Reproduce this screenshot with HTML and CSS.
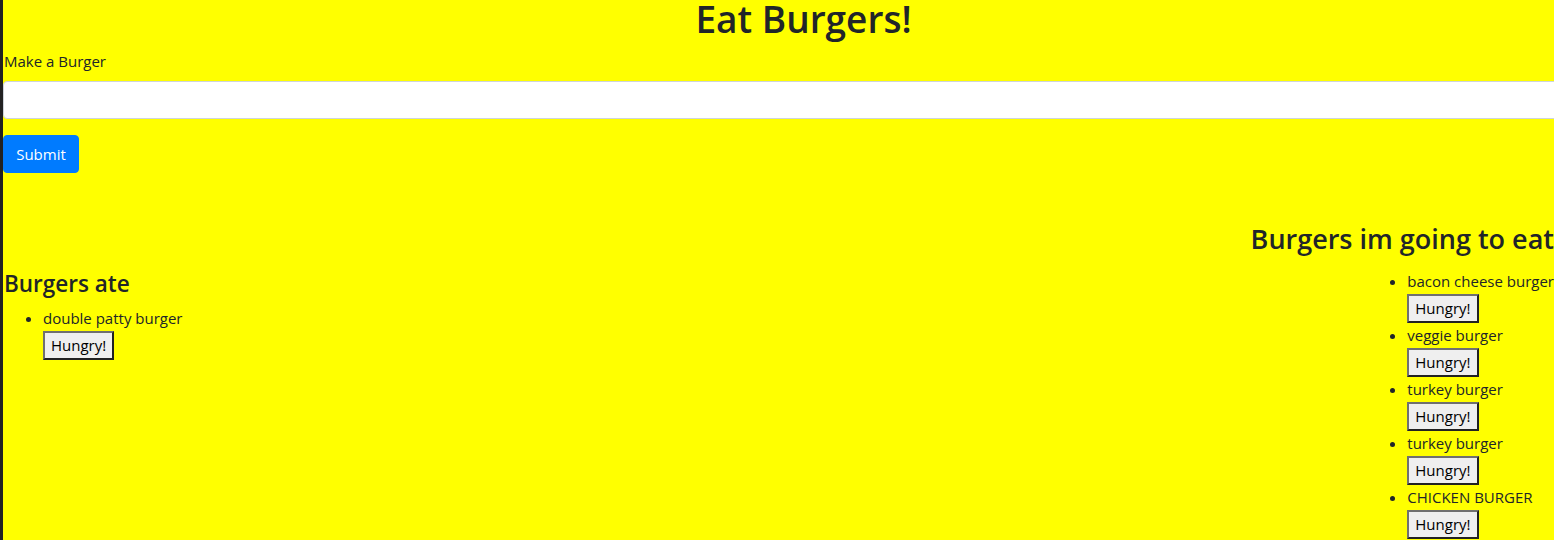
FILE: index.html
```html
<!DOCTYPE html>
<html lang="en">
<head>
<meta charset="utf-8">
<title>Eat Burgers!</title>
<link rel="stylesheet" href="styles.css">
</head>
<body>
<div class="page">
  <h1 class="title">Eat Burgers!</h1>
  <form class="burger-form">
    <label class="form-label" for="burger">Make a Burger</label>
    <input class="form-input" id="burger" type="text">
    <button class="btn-submit" type="submit">Submit</button>
  </form>
  <div class="columns">
    <section class="col col-eaten">
      <h4 class="col-title-sm">Burgers ate</h4>
      <ul class="burger-list">
        <li><div class="burger-name">double patty burger</div><button class="btn-hungry">Hungry!</button></li>
      </ul>
    </section>
    <section class="col col-todo">
      <h3 class="col-title">Burgers im going to eat</h3>
      <ul class="burger-list">
        <li><div class="burger-name">bacon cheese burger</div><button class="btn-hungry">Hungry!</button></li>
        <li><div class="burger-name">veggie burger</div><button class="btn-hungry">Hungry!</button></li>
        <li><div class="burger-name">turkey burger</div><button class="btn-hungry">Hungry!</button></li>
        <li><div class="burger-name">turkey burger</div><button class="btn-hungry">Hungry!</button></li>
        <li><div class="burger-name">CHICKEN BURGER</div><button class="btn-hungry">Hungry!</button></li>
      </ul>
    </section>
  </div>
</div>
</body>
</html>
```
FILE: styles.css
```css
html, body {
  margin: 0;
  padding: 0;
  background: #ffff00;
  overflow: hidden;
}
body {
  font-family: "Open Sans", "Noto Sans", sans-serif;
  font-size: 15px;
  line-height: 24px;
  color: #212529;
}
.page {
  border-left: 3px solid #222;
  min-height: 540px;
  background: #ffff00;
}
.title {
  width: 1601px;
  margin: 0;
  text-align: center;
  font-size: 37px;
  line-height: 37px;
  font-weight: 600;
}
.burger-form {
  display: flex;
  flex-direction: column;
  align-items: flex-start;
}
.form-label {
  display: block;
  margin-top: 12px;
  margin-bottom: 8px;
  padding-left: 1px;
}
.form-input {
  box-sizing: border-box;
  width: 1600px;
  height: 38px;
  margin: 0;
  border: 1px solid #ced4da;
  border-radius: 4px;
  background: #fff;
}
.btn-submit {
  box-sizing: border-box;
  width: 76px;
  height: 38px;
  margin-top: 16px;
  padding: 6px 0;
  border: 1px solid #007bff;
  border-radius: 4px;
  background: #007bff;
  color: #fff;
  font-family: inherit;
  font-size: 15px;
  line-height: 24px;
}
.columns {
  display: flex;
  justify-content: space-between;
  align-items: flex-start;
}
.col-eaten {
  margin-top: 96px;
}
.col-todo {
  margin-top: 49px;
  display: flex;
  flex-direction: column;
  align-items: flex-end;
}
.col-title {
  margin: 0 0 13px;
  font-size: 27px;
  line-height: 34px;
  font-weight: 600;
}
.col-title-sm {
  margin: 0 0 8px;
  padding-left: 1px;
  font-size: 22.5px;
  line-height: 29px;
  font-weight: 600;
}
.burger-list {
  margin: 0;
  padding-left: 40px;
}
.burger-list li {
  margin: 0;
}
.burger-name {
  line-height: 24px;
}
.btn-hungry {
  display: block;
  box-sizing: border-box;
  height: 29px;
  margin: 1px 0 0;
  padding: 1px 6px;
  border: 2px solid;
  border-color: #707070 #222 #222 #707070;
  background: #efefef;
  color: #000;
  font-family: inherit;
  font-size: 15px;
  line-height: 21px;
}
```
